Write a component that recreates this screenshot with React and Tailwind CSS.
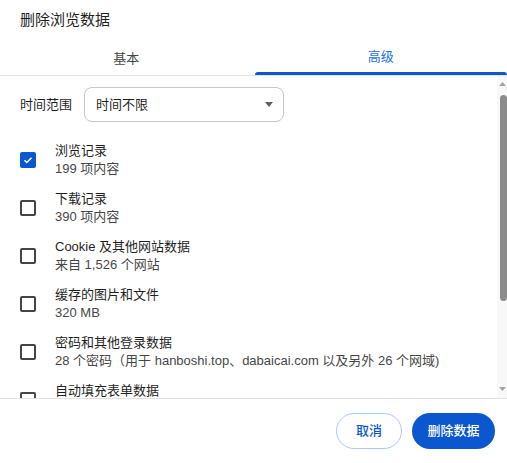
const font = { fontFamily: '"Liberation Sans", "Noto Sans CJK SC", sans-serif' };

const itens = [
  { titulo: '浏览记录', sub: '199 项内容', marcado: true },
  { titulo: '下载记录', sub: '390 项内容' },
  { titulo: 'Cookie 及其他网站数据', sub: '来自 1,526 个网站' },
  { titulo: '缓存的图片和文件', sub: '320 MB' },
  { titulo: '密码和其他登录数据', sub: '28 个密码（用于 hanboshi.top、dabaicai.com 以及另外 26 个网域)' },
  { titulo: '自动填充表单数据', sub: '' },
];

function Caixa({ marcado }) {
  if (marcado) {
    return (
      <div className="w-[16px] h-[16px] rounded-[2px] bg-[#0b57d0] flex items-center justify-center shrink-0">
        <svg width="12" height="12" viewBox="0 0 24 24" fill="none" stroke="white" strokeWidth="3">
          <path d="M5 12.5l4.5 4.5L19 7.5" />
        </svg>
      </div>
    );
  }
  return <div className="w-[16px] h-[16px] rounded-[2px] border-2 border-[#444746] shrink-0" />;
}

export default function App() {
  return (
    <div className="w-[507px] h-[463px] bg-white flex flex-col text-[#1f1f1f] overflow-hidden" style={font}>
      {/* Titulo */}
      <div className="h-[42px] shrink-0 pl-[20px] pt-[10px] text-[15px] leading-[20px]">删除浏览数据</div>

      {/* Abas */}
      <div className="h-[34px] shrink-0 flex border-b border-[#e3e3e3] text-[13px]">
        <div className="flex-1 flex items-center justify-center text-[#444746]">基本</div>
        <div className="flex-1 flex flex-col pl-[2px]">
          <div className="flex-1 flex items-center justify-center text-[#1a73e8]">高级</div>
          <div className="h-[3px] bg-[#0b57d0] rounded-t-[3px]" />
        </div>
      </div>

      {/* Conteudo */}
      <div className="h-[322px] shrink-0 flex overflow-hidden">
        <div className="flex-1 overflow-hidden pt-[11px]">
          <div className="flex items-center h-[35px] pl-[20px] text-[13px]">
            <span className="w-[64px]">时间范围</span>
            <div className="w-[200px] h-[35px] border border-[#c4c7c5] rounded-[8px] flex items-center justify-between pl-[11px] pr-[10px]">
              <span>时间不限</span>
              <svg width="8" height="5" viewBox="0 0 8 5"><path d="M0 0h8L4 5z" fill="#5f6368" /></svg>
            </div>
          </div>
          <div className="mt-[14px]">
            {itens.map(item => (
              <div key={item.titulo} className="h-[48px] flex items-center pl-[20px]">
                <Caixa marcado={item.marcado} />
                <div className="ml-[19px] text-[13px] leading-[18px] whitespace-nowrap">
                  <div>{item.titulo}</div>
                  <div className="h-[18px] text-[#474747]">{item.sub}</div>
                </div>
              </div>
            ))}
          </div>
        </div>
        {/* Barra de rolagem */}
        <div className="w-[10px] bg-[#f8f8f8] flex flex-col items-center">
          <svg className="mt-[6px]" width="7" height="4" viewBox="0 0 7 4"><path d="M0 4h7L3.5 0z" fill="#a3a3a3" /></svg>
          <div className="mt-[9px] w-[7px] h-[206px] rounded-[4px] bg-[#8b8b8b] ml-[2px]" />
          <div className="flex-1" />
          <svg className="mb-[7px]" width="7" height="4" viewBox="0 0 7 4"><path d="M0 0h7L3.5 4z" fill="#a3a3a3" /></svg>
        </div>
      </div>

      {/* Rodape */}
      <div className="flex-1 border-t border-[#e3e3e3] flex items-center justify-end gap-[10px] pr-[12px] text-[13px] font-medium">
        <button className="w-[66px] h-[36px] rounded-full border border-[#a8c7fa] text-[#0b57d0]">取消</button>
        <button className="w-[83px] h-[36px] rounded-full bg-[#0b57d0] text-white">删除数据</button>
      </div>
    </div>
  );
}
